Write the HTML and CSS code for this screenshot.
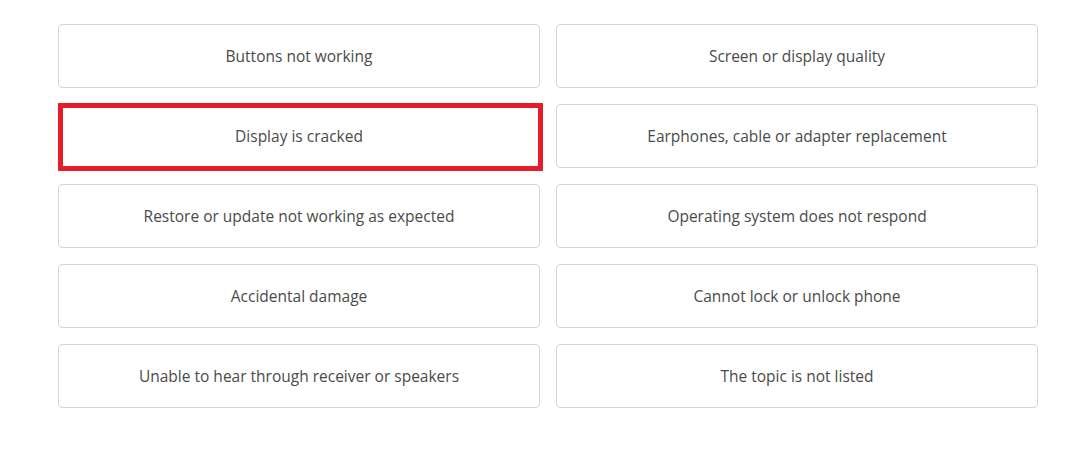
FILE: index.html
```html
<!DOCTYPE html>
<html lang="en">

<head>
  <meta charset="UTF-8">
  <meta name="viewport" content="width=device-width, initial-scale=1.0">
  <title>Topics</title>
  <link rel="stylesheet" href="styles.css">
</head>

<body>
  <div class="topics">
    <div class="topic">Buttons not working</div>
    <div class="topic">Screen or display quality</div>
    <div class="topic marked">Display is cracked</div>
    <div class="topic">Earphones, cable or adapter replacement</div>
    <div class="topic">Restore or update not working as expected</div>
    <div class="topic">Operating system does not respond</div>
    <div class="topic">Accidental damage</div>
    <div class="topic">Cannot lock or unlock phone</div>
    <div class="topic">Unable to hear through receiver or speakers</div>
    <div class="topic">The topic is not listed</div>
  </div>
</body>

</html>
```

FILE: styles.css
```css
* {
  box-sizing: border-box;
}

body {
  margin: 0;
  background: #fff;
  font-family: "Open Sans", "Noto Sans", sans-serif;
  color: #4a4a4a;
}

.topics {
  display: grid;
  grid-template-columns: 482px 482px;
  gap: 16px;
  padding: 24px 0 0 58px;
}

.topic {
  position: relative;
  height: 64px;
  display: flex;
  align-items: center;
  justify-content: center;
  border: 1px solid #d6d6d6;
  border-radius: 4px;
  font-size: 15.5px;
}

.marked::after {
  content: "";
  position: absolute;
  top: -2px;
  left: -1px;
  right: -4px;
  bottom: -4px;
  border: 5px solid #e31e2a;
}
```
